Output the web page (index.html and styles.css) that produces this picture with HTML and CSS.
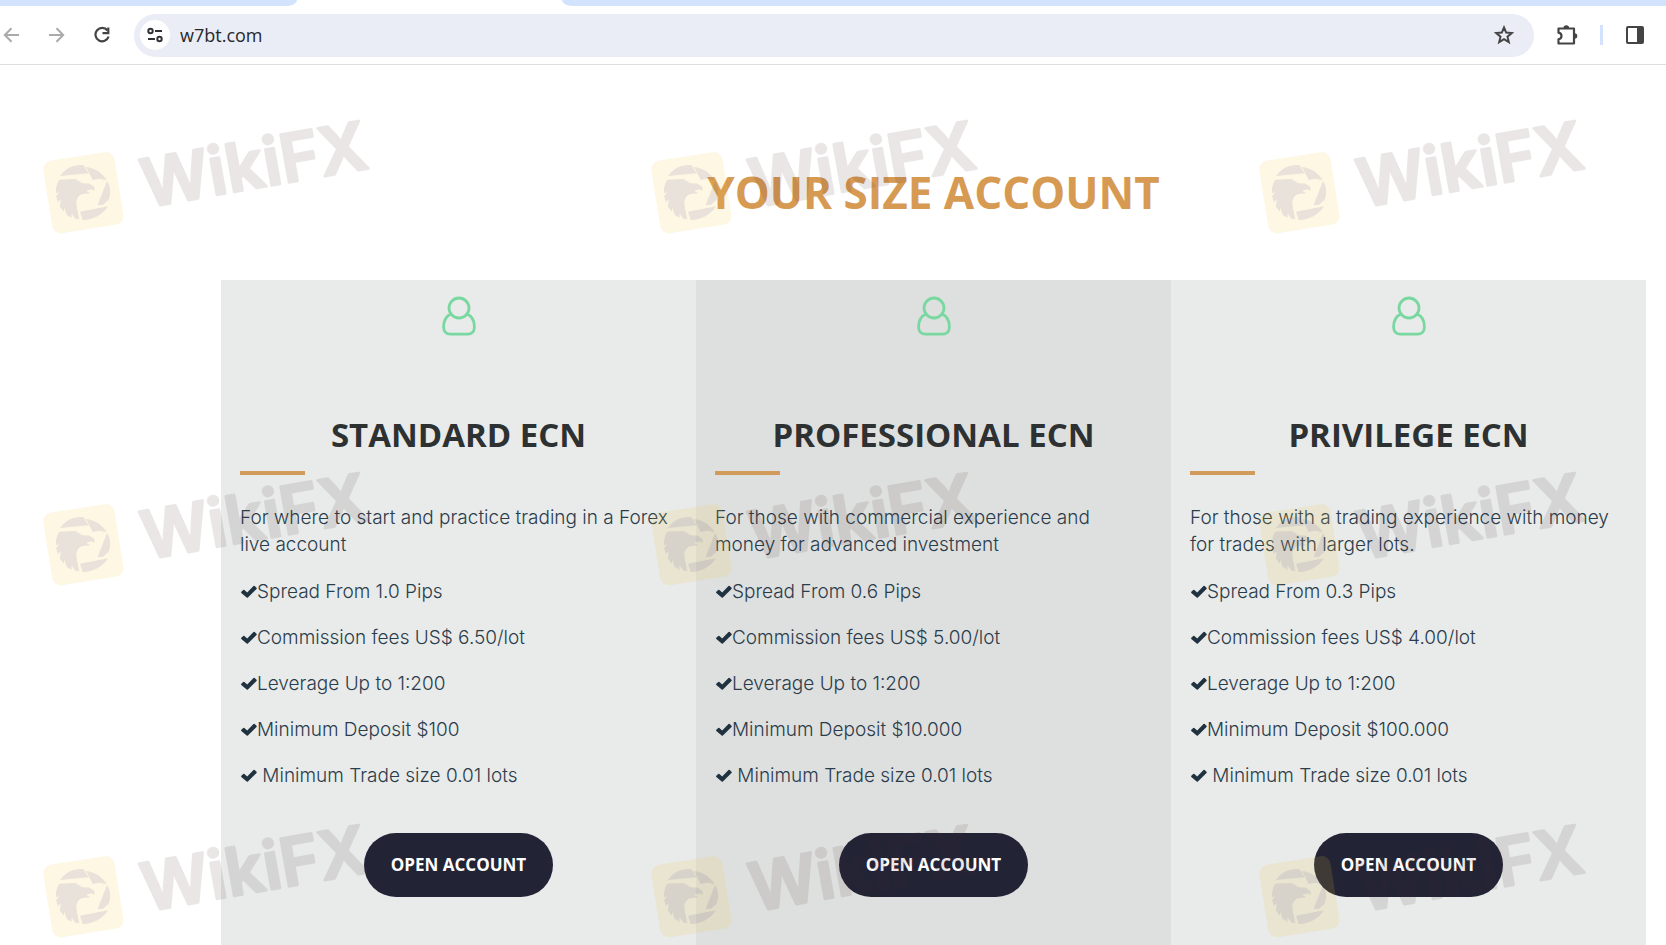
FILE: index.html
```html
<!DOCTYPE html>
<html lang="en">
<head>
<meta charset="utf-8">
<title>w7bt.com</title>
<link rel="stylesheet" href="styles.css">
</head>
<body>
<svg class="defs" aria-hidden="true">
  <symbol id="check" viewBox="0 0 16 13"><path d="M.3 6.800 2.200 4.900q.6-.5 1.200 0L6.200 7.500 12.500 1q.6-.5 1.200 0l1.800 1.800q.5.6 0 1.200L6.900 12.500q-.6.6-1.200 0L.3 8q-.4-.6 0-1.200z" fill="#20323f"/></symbol>
  <symbol id="user" viewBox="0 0 34 40"><g fill="none" stroke="#78d8a0" stroke-width="2.800"><circle cx="17" cy="12" r="10"/><path d="M9 18C4 20 1.600 25 1.600 31c0 4.500 2.800 7.200 6.800 7.200h17.200c4 0 6.800-2.700 6.800-7.200 0-6-2.400-11-7.400-13"/></g></symbol>
  <symbol id="mark" viewBox="0 0 1050 450" overflow="visible">
    <rect x="52" y="168" width="216" height="220" rx="26" transform="rotate(-9 160 278)" fill="#f0c83c" fill-opacity=".14"/>
    <g fill="#5a46a0" fill-opacity=".12">
      <path d="M90 228C106 204 132 193 160 195L176 220z"/>
      <path d="M168 200C194 204 218 219 230 240L207 236 188 240z"/>
      <path d="M231 243C244 262 242 284 235 300L218 315 203 315z"/>
      <path d="M150 335L234 319C218 344 190 360 158 360z"/>
      <path d="M88 239L136 237 158 250 180 251 193 262 193 274 186 268 168 272 181 280 160 282C146 284 139 296 139 309L142 330 148 358 136 356 125 340 124 353 110 345 103 322 102 335 90 321 92 299 84 305 78 288 88 277 78 280C77 263 81 249 88 239z"/>
    </g>
    <g opacity=".11"><text class="mark-text" transform="translate(347 323) rotate(-10)">WikiFX</text></g>
  </symbol>
</svg>
<header class="browser">
  <div class="tabs"><span class="tabs-left"></span><span class="tabs-right"></span></div>
  <div class="toolbar">
    <nav class="history" aria-label="Browser">
      <button class="tool" aria-label="Back"><svg width="18" height="18" viewBox="0 0 18 18"><path d="M17 9H3M9.500 2.300 2.800 9l6.700 6.700" fill="none" stroke="#aaa" stroke-width="2"/></svg></button>
      <button class="tool" aria-label="Forward"><svg width="18" height="18" viewBox="0 0 18 18"><path d="M1 9h14M8.500 2.300 15.200 9l-6.700 6.700" fill="none" stroke="#aaa" stroke-width="2"/></svg></button>
      <button class="tool" aria-label="Reload"><svg width="18" height="18" viewBox="0 0 18 18"><path d="M13.500 4.500A6.700 6.700 0 1 0 14.600 10.500" fill="none" stroke="#444" stroke-width="2.200"/><path d="M14.300 1.500v5.700H8.500" fill="none" stroke="#444" stroke-width="2.200"/></svg></button>
    </nav>
    <div class="omnibox">
      <button class="site" aria-label="Site information"><svg width="16" height="16" viewBox="0 0 16 16"><g fill="none" stroke="#303134" stroke-width="2"><circle cx="3.500" cy="4" r="2.200"/><path d="M8 4h7M1 12h7"/><circle cx="12.500" cy="12" r="2.200"/></g></svg></button>
      <input class="address" type="text" value="w7bt.com" aria-label="Address">
      <button class="tool" aria-label="Bookmark"><svg width="20" height="20" viewBox="0 0 20 20"><path d="M10 2.500l2.200 5.100 5.500.5-4.200 3.600 1.300 5.400-4.800-2.900-4.800 2.900 1.300-5.400L2.300 8.100l5.500-.5z" fill="none" stroke="#444" stroke-width="2"/></svg></button>
    </div>
    <button class="tool" aria-label="Extensions"><svg width="22" height="22" viewBox="0 0 22 22"><path d="M2.500 4.500H18V19.500H2.500V15.300C6.500 14.500 6.500 9.500 2.500 8.700z" fill="none" stroke="#444" stroke-width="2.200" stroke-linejoin="round"/><path d="M7.500 4a2.800 2.800 0 0 1 5.600 0zM18.500 9.200a2.800 2.800 0 0 1 0 5.600z" fill="#444"/></svg></button>
    <span class="divider"></span>
    <button class="tool" aria-label="Side panel"><svg width="20" height="20" viewBox="0 0 20 20"><rect x="2" y="2" width="16" height="16" rx="1" fill="none" stroke="#444" stroke-width="2"/><path d="M12 2h6v16h-6z" fill="#444"/></svg></button>
  </div>
</header>
<main class="page">
  <h1 class="title">YOUR SIZE ACCOUNT</h1>
  <div class="plans">
    <section class="plan">
      <svg class="user"><use href="#user"/></svg>
      <h2 class="plan-name">STANDARD ECN</h2>
      <hr class="rule">
      <p class="intro">For where to start and practice trading in a Forex live account</p>
      <ul class="features">
        <li><svg class="check"><use href="#check"/></svg>Spread From 1.0 Pips</li>
        <li><svg class="check"><use href="#check"/></svg>Commission fees US$ 6.50/lot</li>
        <li><svg class="check"><use href="#check"/></svg>Leverage Up to 1:200</li>
        <li><svg class="check"><use href="#check"/></svg>Minimum Deposit $100</li>
        <li><svg class="check"><use href="#check"/></svg> Minimum Trade size 0.01 lots</li>
      </ul>
      <a class="open" href="#">OPEN ACCOUNT</a>
    </section>
    <section class="plan plan-mid">
      <svg class="user"><use href="#user"/></svg>
      <h2 class="plan-name">PROFESSIONAL ECN</h2>
      <hr class="rule">
      <p class="intro">For those with commercial experience and money for advanced investment</p>
      <ul class="features">
        <li><svg class="check"><use href="#check"/></svg>Spread From 0.6 Pips</li>
        <li><svg class="check"><use href="#check"/></svg>Commission fees US$ 5.00/lot</li>
        <li><svg class="check"><use href="#check"/></svg>Leverage Up to 1:200</li>
        <li><svg class="check"><use href="#check"/></svg>Minimum Deposit $10.000</li>
        <li><svg class="check"><use href="#check"/></svg> Minimum Trade size 0.01 lots</li>
      </ul>
      <a class="open" href="#">OPEN ACCOUNT</a>
    </section>
    <section class="plan">
      <svg class="user"><use href="#user"/></svg>
      <h2 class="plan-name">PRIVILEGE ECN</h2>
      <hr class="rule">
      <p class="intro">For those with a trading experience with money for trades with larger lots.</p>
      <ul class="features">
        <li><svg class="check"><use href="#check"/></svg>Spread From 0.3 Pips</li>
        <li><svg class="check"><use href="#check"/></svg>Commission fees US$ 4.00/lot</li>
        <li><svg class="check"><use href="#check"/></svg>Leverage Up to 1:200</li>
        <li><svg class="check"><use href="#check"/></svg>Minimum Deposit $100.000</li>
        <li><svg class="check"><use href="#check"/></svg> Minimum Trade size 0.01 lots</li>
      </ul>
      <a class="open" href="#">OPEN ACCOUNT</a>
    </section>
  </div>
</main>
<div class="watermarks">
  <svg class="mark"><use href="#mark"/></svg><svg class="mark"><use href="#mark"/></svg><svg class="mark"><use href="#mark"/></svg>
  <svg class="mark"><use href="#mark"/></svg><svg class="mark"><use href="#mark"/></svg><svg class="mark"><use href="#mark"/></svg>
  <svg class="mark"><use href="#mark"/></svg><svg class="mark"><use href="#mark"/></svg><svg class="mark"><use href="#mark"/></svg>
</div>
</body>
</html>
```
FILE: styles.css
```css
* { box-sizing: border-box; }
body {
  margin: 0;
  min-height: 100vh;
  display: flex;
  flex-direction: column;
  position: relative;
  background: #fff;
  font-family: Inter, "Open Sans", sans-serif;
}
.defs { position: absolute; width: 0; height: 0; }
svg { display: block; }
button { border: 0; padding: 0; background: none; }

.browser { border-bottom: 1px solid #dedfe1; }
.tabs { display: flex; justify-content: space-between; height: 6px; }
.tabs-left { width: 297px; background: #d3e3fd; border-bottom-right-radius: 10px 6px; }
.tabs-right { flex: 1; margin-left: 265px; background: #d3e3fd; border-bottom-left-radius: 10px 6px; }
.toolbar { display: flex; align-items: center; gap: 22px; height: 58px; padding: 0 21px 0 2px; }
.history { display: flex; gap: 28px; }
.omnibox {
  flex: 1;
  display: flex;
  align-items: center;
  gap: 10px;
  height: 43px;
  padding: 0 20px 0 6px;
  border-radius: 22px;
  background: #eaedf6;
}
.site { display: grid; place-items: center; width: 30px; height: 30px; border-radius: 50%; background: #fff; }
.address {
  flex: 1;
  min-width: 0;
  border: 0;
  padding: 0;
  background: none;
  color: #26282b;
  font: 18px "Open Sans", sans-serif;
}
.divider { width: 3px; height: 20px; background: #d3e3fd; }

.page { flex: 1; display: flex; flex-direction: column; padding: 0 20px 0 221px; }
.title {
  margin: 0;
  padding: 97px 0 58px;
  color: #d79a53;
  font: bold 44px/60px "Open Sans", sans-serif;
  text-align: center;
}
.plans { flex: 1; display: grid; grid-template-columns: repeat(3, 1fr); }
.plan { padding: 16px 19px 32px; background: #e8ebea; display: flex; flex-direction: column; }
.plan-mid { background: #dee0df; }
.user { width: 34px; height: 40px; align-self: center; }
.plan-name {
  margin: 79px 0 0;
  color: #2e3131;
  font: bold 33px/40px "Open Sans", sans-serif;
  text-align: center;
}
.rule { width: 65px; height: 4px; margin: 16px 0 29px; border: 0; background: #d19c5b; }
.intro, .features { margin: 0 0 20px; color: #2b3c4b; font-size: 19px; line-height: 27px; font-weight: 300; }
.intro { padding-right: 4px; }
.features { padding: 0; list-style: none; display: grid; gap: 19px; }
.features li { white-space: pre; }
.check { display: inline-block; width: 16px; height: 13px; margin: 0 0 0 1px; vertical-align: 0; }
.open {
  align-self: center;
  margin-top: 24px;
  padding: 0 27px;
  border-radius: 32px;
  background: #222436;
  color: #fff;
  font: bold 17px/64px "Open Sans", sans-serif;
  text-decoration: none;
}

.watermarks {
  position: absolute;
  inset: 100px 0 0 30px;
  display: grid;
  grid-template-columns: repeat(3, 608px);
  grid-auto-rows: 352px;
  overflow: hidden;
  pointer-events: none;
}
.mark { width: 350px; height: 150px; overflow: visible; }
.mark-text {
  font: 600 200px Inter, sans-serif;
  fill: #462828;
  stroke: #462828;
  stroke-width: 8px;
  stroke-linejoin: round;
}
```
